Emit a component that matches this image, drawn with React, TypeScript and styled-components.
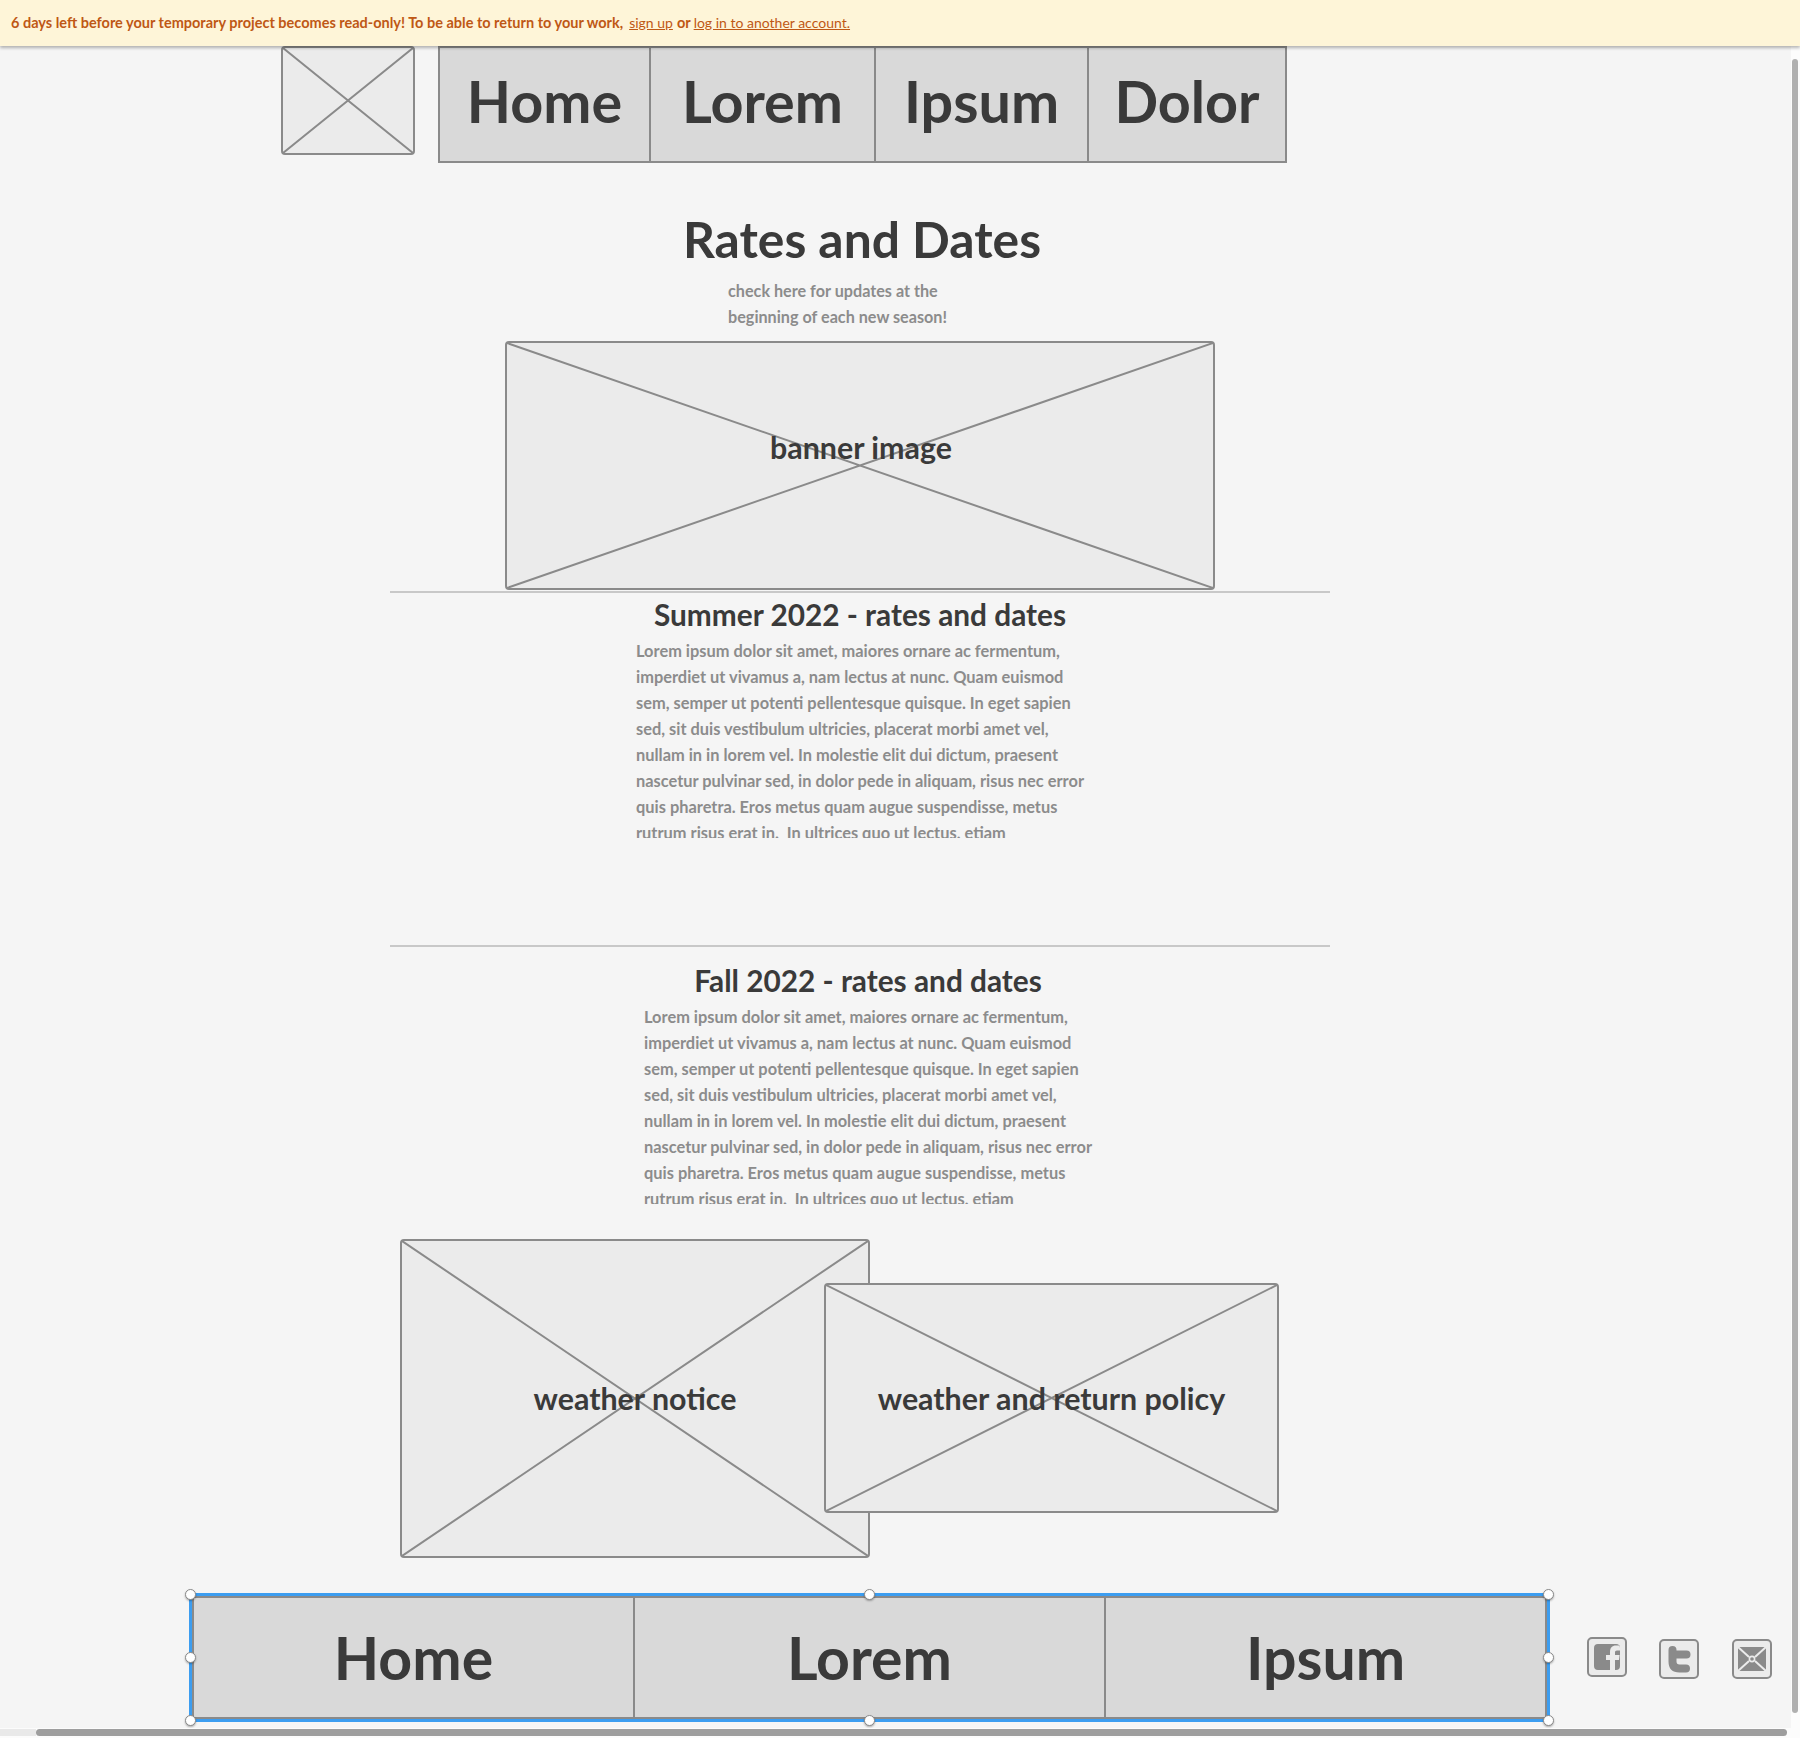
import React from "react";
import styled, { createGlobalStyle } from "styled-components";

const GlobalStyle = createGlobalStyle`
  html, body { margin: 0; padding: 0; background: #fbfbfb; }
  * { box-sizing: border-box; }
`;

const FONT = `Lato, "Noto Sans", "Liberation Sans", sans-serif`;
const LINE = "#8a8a8a";
const INK = "#3a3a3a";

const Frame = styled.div`
  display: grid;
  grid-template-columns: 1791px 9px;
  grid-template-rows: 46px 1682px 10px;
  width: 1800px;
  height: 1738px;
  overflow: hidden;
  font-family: ${FONT};
  background: #fcfcfc;
`;

const Notice = styled.div`
  grid-column: 1 / 3;
  position: relative;
  z-index: 5;
  display: flex;
  align-items: center;
  padding: 0 0 2px 11px;
  background: #fef5d8;
  box-shadow: 0 2px 3px rgba(0, 0, 0, 0.28);
  color: #bf5815;
  white-space: pre;
`;
const NoticeStrong = styled.strong<{ $ml?: number }>`
  margin-left: ${(p) => p.$ml ?? 0}px;
  font-size: 14.5px;
  font-weight: 700;
`;
const NoticeLink = styled.a<{ $ml: number }>`
  margin-left: ${(p) => p.$ml}px;
  font-size: 14px;
  font-weight: 400;
  text-decoration: underline;
  color: #bf5815;
`;

const Canvas = styled.main`
  background: #f5f5f5;
  overflow: hidden;
  display: flex;
  flex-direction: column;
`;

const VTrack = styled.div`
  padding: 13px 0 0 1px;
`;
const VThumb = styled.div`
  width: 6px;
  height: 1654px;
  border-radius: 3px;
  background: #b0b0b0;
`;
const HTrack = styled.div`
  grid-column: 1 / 3;
  display: flex;
  padding-top: 1px;
`;
const HStub = styled.div`
  width: 36px;
  height: 7px;
  background: #e9e9e9;
`;
const HThumb = styled.div`
  width: 1751px;
  height: 7px;
  border-radius: 4px;
  background: #9e9e9e;
`;

const HeaderRow = styled.header`
  display: flex;
  align-items: flex-start;
  gap: 23px;
  padding-left: 281px;
`;

const NavBar = styled.nav<{ $cols: string; $h: number }>`
  display: grid;
  grid-template-columns: ${(p) => p.$cols};
  height: ${(p) => p.$h}px;
  border: 2px solid ${LINE};
  background: #d9d9d9;
`;
const NavCell = styled.a<{ $lift?: number; $size: number }>`
  display: flex;
  align-items: center;
  justify-content: center;
  padding-bottom: ${(p) => p.$lift ?? 0}px;
  font-size: ${(p) => p.$size}px;
  font-weight: 700;
  color: ${INK};
  & + & {
    border-left: 2px solid ${LINE};
  }
`;

const Title = styled.h1`
  width: 1724px;
  margin: 46px 0 0;
  text-align: center;
  font-size: 49.8px;
  line-height: 60px;
  font-weight: 700;
  color: ${INK};
`;
const Subtitle = styled.p`
  margin: 9px 0 0 728px;
  font-size: 16.2px;
  line-height: 26px;
  font-weight: 700;
  color: #8c8c8c;
  white-space: pre;
`;

const BannerWrap = styled.div`
  margin: 11px 0 0 505px;
`;

const Placeholder = styled.div<{ $w: number; $h: number }>`
  position: relative;
  display: flex;
  align-items: center;
  justify-content: center;
  width: ${(p) => p.$w}px;
  height: ${(p) => p.$h}px;
  border: 2px solid ${LINE};
  border-radius: 4px;
  background: #ebebeb;
`;
const Cross = styled.svg`
  position: absolute;
  inset: 0;
  width: 100%;
  height: 100%;
`;
const PlaceholderLabel = styled.span<{ $lift?: number; $shift?: number }>`
  position: relative;
  margin: 0 0 ${(p) => p.$lift ?? 0}px ${(p) => p.$shift ?? 0}px;
  font-size: 30.4px;
  font-weight: 700;
  color: ${INK};
`;

const Rule = styled.hr<{ $top: number }>`
  width: 940px;
  height: 2px;
  margin: ${(p) => p.$top}px 0 0 390px;
  border: 0;
  background: #c8c8c8;
`;

const SectionTitle = styled.h2<{ $center: number; $top: number }>`
  width: ${(p) => p.$center * 2}px;
  margin: ${(p) => p.$top}px 0 0;
  text-align: center;
  font-size: 29.8px;
  line-height: 36px;
  font-weight: 700;
  color: ${INK};
`;
const Copy = styled.p<{ $left: number; $top: number }>`
  height: 200px;
  margin: ${(p) => p.$top}px 0 0 ${(p) => p.$left}px;
  overflow: hidden;
  font-size: 16.4px;
  line-height: 26px;
  font-weight: 700;
  color: #8c8c8c;
  white-space: pre;
`;

const NoticeRow = styled.section`
  display: flex;
  align-items: flex-start;
  margin: 35px 0 0 400px;
`;
const SecondNotice = styled.div`
  margin: 44px 0 0 -46px;
`;

const FooterRow = styled.footer`
  display: flex;
  align-items: flex-start;
  margin: 35px 0 0 189px;
`;
const Selection = styled.div`
  position: relative;
  width: 1361px;
  height: 129px;
  border: 3px solid #3c9df0;
`;
const Handle = styled.span<{ $x: string; $y: string }>`
  position: absolute;
  left: ${(p) => p.$x};
  top: ${(p) => p.$y};
  width: 11px;
  height: 11px;
  margin: -5.5px 0 0 -5.5px;
  border: 1px solid #8a8a8a;
  border-radius: 50%;
  background: #fff;
  box-shadow: 0 1px 2px rgba(0, 0, 0, 0.3);
`;
const Social = styled.div`
  display: flex;
  align-items: flex-start;
  margin-left: 37px;
`;
const SocialIcon = styled.svg<{ $gap: number; $top: number }>`
  width: 40px;
  height: 40px;
  margin: ${(p) => p.$top}px 0 0 ${(p) => p.$gap}px;
`;

const X = () => (
  <Cross viewBox="0 0 100 100" preserveAspectRatio="none" aria-hidden>
    <path
      d="M0 0L100 100M100 0L0 100"
      stroke={LINE}
      strokeWidth="2"
      fill="none"
      vectorEffect="non-scaling-stroke"
    />
  </Cross>
);

const IconFrame = () => (
  <rect x="1" y="1" width="38" height="38" rx="4" fill="#ebebeb" stroke={LINE} strokeWidth="2" />
);

const LOREM = (
  <>
    {"Lorem ipsum dolor sit amet, maiores ornare ac fermentum,\n"}
    {"imperdiet ut vivamus a, nam lectus at nunc. Quam euismod\n"}
    {"sem, semper ut potenti pellentesque quisque. In eget sapien\n"}
    {"sed, sit duis vestibulum ultricies, placerat morbi amet vel,\n"}
    {"nullam in in lorem vel. In molestie elit dui dictum, praesent\n"}
    {"nascetur pulvinar sed, in dolor pede in aliquam, risus nec error\n"}
    {"quis pharetra. Eros metus quam augue suspendisse, metus\n"}
    {"rutrum risus erat in.  In ultrices quo ut lectus, etiam"}
  </>
);

export default function App() {
  return (
    <>
      <GlobalStyle />
      <Frame>
        <Notice>
          <NoticeStrong>6 days left before your temporary project becomes read-only! To be able to return to your work,</NoticeStrong>
          <NoticeLink $ml={6}>sign up</NoticeLink>
          <NoticeStrong $ml={4}>or</NoticeStrong>
          <NoticeLink $ml={3}>log in to another account.</NoticeLink>
        </Notice>
        <Canvas>
          <HeaderRow>
            <Placeholder $w={134} $h={109}>
              <X />
            </Placeholder>
            <NavBar $cols="209px 225px 213px 198px" $h={117}>
              <NavCell $size={57.5} $lift={8}>Home</NavCell>
              <NavCell $size={57.5} $lift={8}>Lorem</NavCell>
              <NavCell $size={57.5} $lift={8}>Ipsum</NavCell>
              <NavCell $size={57.5} $lift={8}>Dolor</NavCell>
            </NavBar>
          </HeaderRow>
          <Title>Rates and Dates</Title>
          <Subtitle>{"check here for updates at the\nbeginning of each new season!"}</Subtitle>
          <BannerWrap>
            <Placeholder $w={710} $h={249}>
              <X />
              <PlaceholderLabel $lift={38} $shift={2}>banner image</PlaceholderLabel>
            </Placeholder>
          </BannerWrap>
          <Rule $top={1} />
          <SectionTitle $center={860} $top={4}>Summer 2022 - rates and dates</SectionTitle>
          <Copy $left={636} $top={5}>{LOREM}</Copy>
          <Rule $top={107} />
          <SectionTitle $center={868} $top={16}>Fall 2022 - rates and dates</SectionTitle>
          <Copy $left={644} $top={5}>{LOREM}</Copy>
          <NoticeRow>
            <Placeholder $w={470} $h={319}>
              <X />
              <PlaceholderLabel $lift={2}>weather notice</PlaceholderLabel>
            </Placeholder>
            <SecondNotice>
              <Placeholder $w={455} $h={230}>
                <X />
                <PlaceholderLabel>weather and return policy</PlaceholderLabel>
              </Placeholder>
            </SecondNotice>
          </NoticeRow>
          <FooterRow>
            <Selection>
              <NavBar $cols="439px 471px 1fr" $h={123}>
                <NavCell $size={59}>Home</NavCell>
                <NavCell $size={59}>Lorem</NavCell>
                <NavCell $size={59}>Ipsum</NavCell>
              </NavBar>
              <Handle $x="-1.5px" $y="-1.5px" />
              <Handle $x="50%" $y="-1.5px" />
              <Handle $x="calc(100% + 1px)" $y="-1.5px" />
              <Handle $x="-1.5px" $y="50%" />
              <Handle $x="calc(100% + 1px)" $y="50%" />
              <Handle $x="-1.5px" $y="calc(100% + 1px)" />
              <Handle $x="50%" $y="calc(100% + 1px)" />
              <Handle $x="calc(100% + 1px)" $y="calc(100% + 1px)" />
            </Selection>
            <Social>
              <SocialIcon viewBox="0 0 40 40" $gap={0} $top={44}>
                <IconFrame />
                <path
                  fillRule="evenodd"
                  fill={LINE}
                  d="M11 7H29a4 4 0 0 1 4 4V29a4 4 0 0 1-4 4H11a4 4 0 0 1-4-4V11a4 4 0 0 1 4-4ZM23 33H28V23H32L32.6 18H28V15.6C28 14.4 28.5 13.6 30 13.6H33V8.6H29C25 8.6 23 11 23 15V18H19V23H23Z"
                />
              </SocialIcon>
              <SocialIcon viewBox="0 0 40 40" $gap={32} $top={46}>
                <IconFrame />
                <path
                  d="M13.5 11V22.5Q13.5 29.5 20.5 29.5H27M13.5 15.5H27.5"
                  fill="none"
                  stroke={LINE}
                  strokeWidth="8"
                  strokeLinecap="round"
                />
              </SocialIcon>
              <SocialIcon viewBox="0 0 40 40" $gap={33} $top={46}>
                <IconFrame />
                <rect x="6" y="8" width="28" height="24" fill={LINE} />
                <path
                  d="M6 8L17 18M34 8L23 18M6 32L17 22M34 32L23 22"
                  stroke="#ebebeb"
                  strokeWidth="2"
                  fill="none"
                />
                <circle cx="20" cy="20" r="2.6" fill={LINE} stroke="#ebebeb" strokeWidth="1.6" />
              </SocialIcon>
            </Social>
          </FooterRow>
        </Canvas>
        <VTrack>
          <VThumb />
        </VTrack>
        <HTrack>
          <HStub />
          <HThumb />
        </HTrack>
      </Frame>
    </>
  );
}
